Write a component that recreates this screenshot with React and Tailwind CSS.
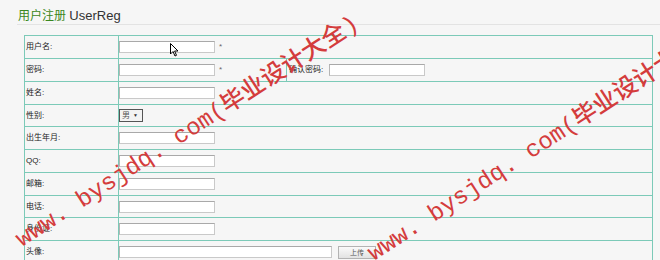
const rows = [
  { label: "用户名:", h: "h-[23px]", kind: "req" },
  { label: "密码:", h: "h-[23px]", kind: "pwd" },
  { label: "姓名:", h: "h-[23px]" },
  { label: "性别:", h: "h-[22px]", kind: "sex" },
  { label: "出生年月:", h: "h-[23px]" },
  { label: "QQ:", h: "h-[23px]" },
  { label: "邮箱:", h: "h-[23px]" },
  { label: "电话:", h: "h-[22px]" },
  { label: "身份证:", h: "h-[23px]" },
  { label: "头像:", h: "h-[23px]", kind: "file" },
]

function TextBox({ wide }) {
  return (
    <div
      className={`${wide ? "w-[213px]" : "w-[96px]"} h-[12px] bg-white border border-[#c9c9c9] border-t-[#a9a9a9] border-l-[#b5b5b5]`}
    />
  )
}

function Watermark({ className }) {
  return (
    <div
      className={`absolute whitespace-nowrap text-[24px] font-medium leading-none text-[#d43c3c] pointer-events-none origin-top-left -rotate-[33deg] ${className}`}
      style={{ fontFamily: '"Liberation Mono", "Noto Sans CJK SC", monospace' }}
    >
      www. bysjdq. com(毕业设计大全)
    </div>
  )
}

export default function App() {
  return (
    <div
      className="relative w-[660px] h-[260px] overflow-hidden bg-[#f6f6f6] text-[#222]"
      style={{ fontFamily: '"Liberation Sans", "Noto Sans CJK SC", sans-serif' }}
    >
      {/* title */}
      <div className="pl-[18px] pt-[9px] h-[24px] text-[12px] leading-[14px]">
        <span className="text-[#3a8720]">用户注册</span>{" "}
        <span className="text-[13px] text-[#333]">UserReg</span>
      </div>
      <div className="ml-[17px] h-px bg-[#e3e3e3]" />

      {/* form table */}
      <div className="ml-[24px] mt-[10px] w-[629px] border-t border-l border-r border-[#7ccab8] text-[8px] leading-none">
        {rows.map((r) => (
          <div key={r.label} className={`flex ${r.h} border-b border-[#7ccab8]`}>
            <div className="w-[94px] shrink-0 flex items-center pl-[1px] border-r border-[#7ccab8]">
              {r.label}
            </div>
            {r.kind === "pwd" ? (
              <>
                <div className="w-[168px] flex items-center gap-[4px] border-r border-[#7ccab8]">
                  <TextBox />
                  <span className="text-[#666]">*</span>
                </div>
                <div className="flex-1 flex items-center pl-[2px] gap-[6px]">
                  <span>确认密码:</span>
                  <TextBox />
                </div>
              </>
            ) : (
              <div className="flex-1 flex items-center gap-[4px]">
                {r.kind === "sex" ? (
                  <div className="w-[24px] h-[13px] bg-[#f3f3f3] border border-[#555] flex items-center pl-[2px] gap-[3px]">
                    <span className="text-[#555]">男</span>
                    <span className="text-[5px] text-[#333]">▼</span>
                  </div>
                ) : r.kind === "file" ? (
                  <>
                    <TextBox wide />
                    <button className="ml-[2px] w-[38px] h-[13px] bg-gradient-to-b from-[#fafafa] to-[#e2e2e2] border border-[#b3b3b3] text-[7px] text-[#555]">
                      上传
                    </button>
                  </>
                ) : (
                  <>
                    <TextBox />
                    {r.kind === "req" && <span className="text-[#666]">*</span>}
                  </>
                )}
              </div>
            )}
          </div>
        ))}
      </div>

      {/* mouse cursor */}
      <svg className="absolute left-[170px] top-[43px]" width="9" height="14" viewBox="0 0 9 14">
        <path d="M0.5 0.5 L0.5 11 L3 8.5 L5 13 L6.5 12.3 L4.6 8 L8 8 Z" fill="#fff" stroke="#000" strokeWidth="1" />
      </svg>

      <Watermark className="left-[12px] top-[232px]" />
      <Watermark className="left-[364px] top-[246px]" />
    </div>
  )
}
